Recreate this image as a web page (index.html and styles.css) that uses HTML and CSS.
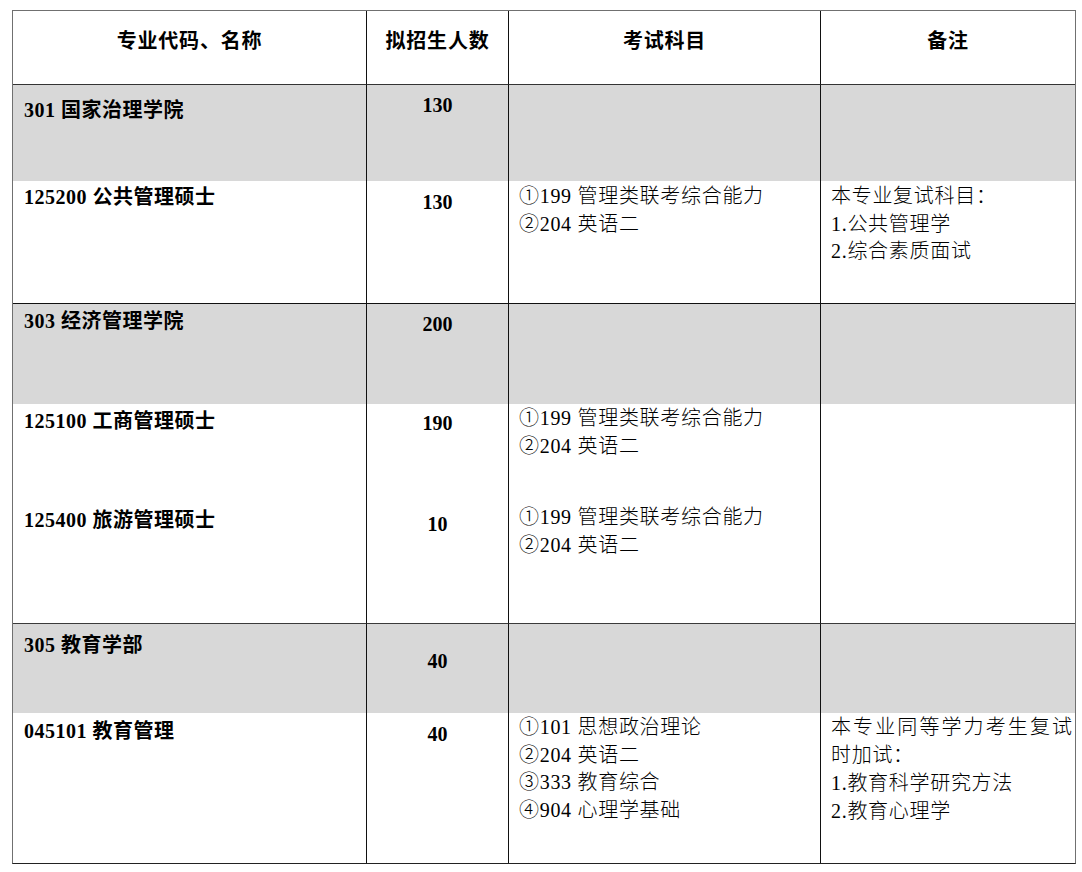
FILE: index.html
```html
<!DOCTYPE html>
<html lang="zh-CN">
<head>
<meta charset="utf-8">
<title>招生专业目录</title>
<link rel="stylesheet" href="styles.css">
</head>
<body>
<div class="sheet">
  <div class="cell head bb1">专业代码、名称</div>
  <div class="cell head vl bb1">拟招生人数</div>
  <div class="cell head vl bb1">考试科目</div>
  <div class="cell head vl bb1">备注</div>

  <div class="cell name gray pt12">301 国家治理学院</div>
  <div class="cell num vl gray pt7">130</div>
  <div class="cell vl gray"></div>
  <div class="cell vl gray"></div>

  <div class="cell name pt3 bb2">125200 公共管理硕士</div>
  <div class="cell num vl pt8 bb2">130</div>
  <div class="cell exam vl pt2 bb2">①199 管理类联考综合能力<br>②204 英语二</div>
  <div class="cell note vl pt2 bb2">本专业复试科目：<br>1.公共管理学<br>2.综合素质面试</div>

  <div class="cell name gray pt4">303 经济管理学院</div>
  <div class="cell num vl gray pt7">200</div>
  <div class="cell vl gray"></div>
  <div class="cell vl gray"></div>

  <div class="cell name pt4">125100 工商管理硕士</div>
  <div class="cell num vl pt6">190</div>
  <div class="cell exam vl pt1">①199 管理类联考综合能力<br>②204 英语二</div>
  <div class="cell note vl"></div>

  <div class="cell name pt4 bb3">125400 旅游管理硕士</div>
  <div class="cell num vl pt8 bb3">10</div>
  <div class="cell exam vl pt1 bb3">①199 管理类联考综合能力<br>②204 英语二</div>
  <div class="cell note vl bb3"></div>

  <div class="cell name gray pt8">305 教育学部</div>
  <div class="cell num vl gray pt24">40</div>
  <div class="cell vl gray"></div>
  <div class="cell vl gray"></div>

  <div class="cell name pt5">045101 教育管理</div>
  <div class="cell num vl pt8">40</div>
  <div class="cell exam vl pt1">①101 思想政治理论<br>②204 英语二<br>③333 教育综合<br>④904 心理学基础</div>
  <div class="cell note tall vl pt0"><span class="wide">本专业同等学力考生复试</span><br>时加试：<br>1.教育科学研究方法<br>2.教育心理学</div>
</div>
</body>
</html>
```

FILE: styles.css
```css
html, body {
  margin: 0;
  padding: 0;
  background: #ffffff;
}

body {
  font-family: "Liberation Serif", "Noto Sans CJK SC", serif;
  font-size: 20px;
  line-height: 27.5px;
  color: #000000;
}

.sheet {
  margin: 10px 0 0 12px;
  width: 1064px;
  box-sizing: border-box;
  border: 1px solid #707070;
  border-bottom-color: #222222;
  display: grid;
  grid-template-columns: 353px 142px 312px 255px;
  grid-template-rows: 74px 96px 123px 100px 99px 121px 89px 150px;
}

.cell {
  box-sizing: border-box;
  min-width: 0;
  white-space: nowrap;
  overflow: visible;
}

.vl {
  border-left: 1px solid #111111;
}

.bb1 { border-bottom: 1px solid #333333; }
.bb2 { border-bottom: 1px solid #111111; }
.bb3 { border-bottom: 1px solid #3a3a3a; }

.gray {
  background: #d8d8d8;
}

.head {
  font-family: "Noto Sans CJK SC", sans-serif;
  font-weight: 700;
  text-align: center;
  letter-spacing: 0.8px;
  padding-top: 15px;
}

.name {
  font-weight: 700;
  padding-left: 11px;
  letter-spacing: 0.5px;
}

.num {
  font-weight: 700;
  text-align: center;
}

.exam {
  padding-left: 10px;
  letter-spacing: 0.7px;
  font-weight: 300;
}

.note {
  padding-left: 10px;
  letter-spacing: 0.7px;
  font-weight: 300;
}

.tall {
  line-height: 28px;
}

.wide {
  letter-spacing: 2.1px;
}

.pt0 { padding-top: 0; }
.pt1 { padding-top: 1px; }
.pt2 { padding-top: 2px; }
.pt3 { padding-top: 3px; }
.pt4 { padding-top: 4px; }
.pt5 { padding-top: 5px; }
.pt6 { padding-top: 6px; }
.pt7 { padding-top: 7px; }
.pt8 { padding-top: 8px; }
.pt12 { padding-top: 12px; }
.pt24 { padding-top: 24px; }
```
